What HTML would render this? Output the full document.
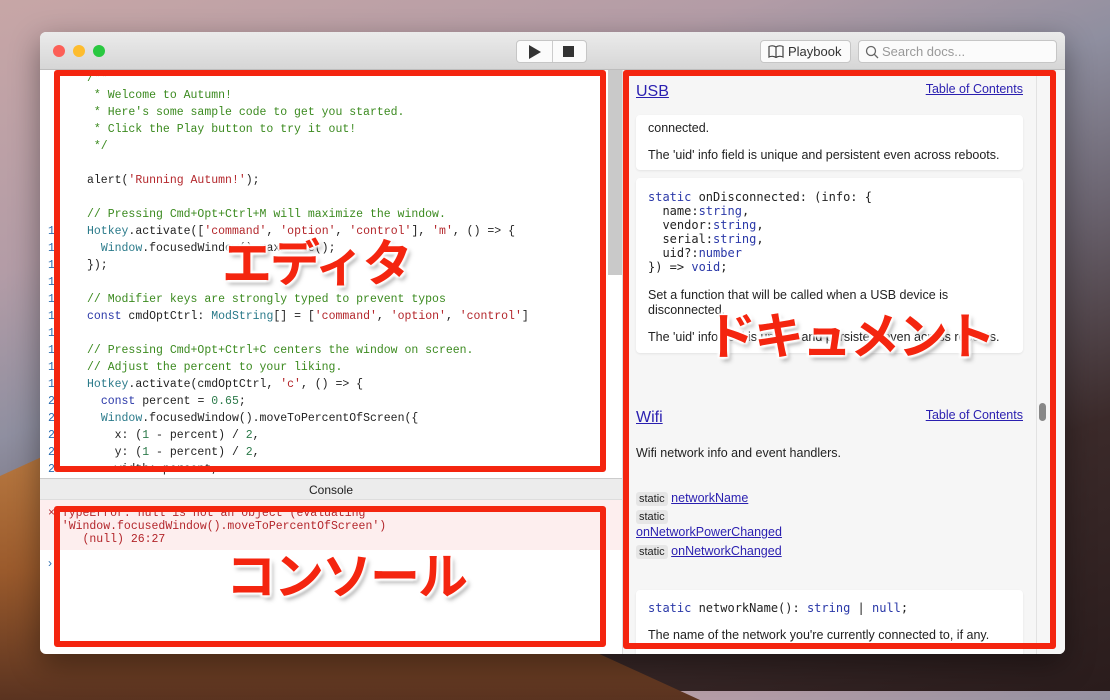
<!DOCTYPE html>
<html><head><meta charset="utf-8"><style>
*{margin:0;padding:0;box-sizing:border-box}
body{width:1110px;height:691px;overflow:hidden;position:relative;font-family:"Liberation Sans","Noto Sans CJK JP",sans-serif;
background:linear-gradient(160deg,#c7a6a6 0%,#b39ca6 25%,#8f8fa0 40%,#6b6470 55%,#3b2a2a 75%,#2a1c1c 100%);}
.dune{position:absolute;left:0;top:380px;width:700px;height:320px;background:linear-gradient(180deg,#c98a4c,#9a5a2c 60%,#5a3320);clip-path:polygon(0 30%,20% 10%,60% 60%,100% 100%,0 100%)}
.win{position:absolute;left:40px;top:32px;width:1025px;height:622px;background:#fff;border-radius:6px;overflow:hidden;box-shadow:0 10px 30px rgba(0,0,0,.4)}
.tb{position:absolute;left:0;top:0;width:100%;height:38px;background:linear-gradient(#ebebeb,#d6d6d6);border-bottom:1px solid #bdbdbd}
.dot{position:absolute;top:13px;width:12px;height:12px;border-radius:50%}
.btn{position:absolute;top:8px;height:23px;background:#fbfbfb;border:1px solid #c6c6c6;border-radius:4px}
.ed{position:absolute;left:0;top:38px;width:582px;height:408px;background:#fff;font-family:"Liberation Mono",monospace;font-size:11.5px;overflow:hidden}
.ln{position:absolute;left:8px;color:#2a6db0}
.c{position:absolute;left:47px;white-space:pre;color:#222}
.g{color:#3b8a1f}.r{color:#b3262b}.b{color:#2a38a8}.t{color:#2a7a8a}.n{color:#2c7a4a}
.con{position:absolute;left:0;top:446px;width:582px;height:22px;background:#ececec;border-top:1px solid #ccc;border-bottom:1px solid #ddd;text-align:center;font-size:12px;line-height:22px;color:#222}
.err{position:absolute;left:0;top:468px;width:582px;height:50px;background:#fdeeee;font-family:"Liberation Mono",monospace;font-size:11.5px;color:#b3262b;white-space:pre;padding:7px 0 0 8px;line-height:13px}
.doc{position:absolute;left:582px;top:38px;width:443px;height:584px;background:#f6f6f6;border-left:1px solid #ddd;font-size:12.5px;color:#222;overflow:hidden}
.doc a{color:#2a1fb0;text-decoration:underline}
.card{position:absolute;left:13px;width:387px;background:#fff;border-radius:4px;box-shadow:0 1px 2px rgba(0,0,0,.08)}
.mono{font-family:"DejaVu Sans Mono",monospace;font-size:12px;white-space:pre;line-height:14px}
.box{position:absolute;border:6px solid #f4250f;border-radius:3px}
.big{position:absolute;color:#f4250f;font-weight:bold;font-size:50px;font-family:"Noto Sans CJK JP",sans-serif;text-shadow:0 0 3px #fff,0 0 3px #fff,2px 2px 2px #fff,-2px -2px 2px #fff,2px -2px 2px #fff,-2px 2px 2px #fff,3px 4px 5px rgba(0,0,0,.35);letter-spacing:-2px;line-height:1}
.tag{background:#e6e6e6;border-radius:3px;padding:1px 3px;font-size:11px}
</style></head><body>
<div class="dune"></div>
<div class="win">
<div class="tb">
<div class="dot" style="left:13px;background:#fc5f57"></div>
<div class="dot" style="left:33px;background:#fdbc2e"></div>
<div class="dot" style="left:53px;background:#29c840"></div>
<div class="btn" style="left:476px;width:71px"><div style="position:absolute;left:35px;top:0;width:1px;height:21px;background:#ccc"></div>
<svg style="position:absolute;left:12px;top:4px" width="12" height="14"><path d="M0 0L12 7L0 14Z" fill="#333"/></svg>
<div style="position:absolute;left:46px;top:5px;width:11px;height:11px;background:#333"></div></div>
<div class="btn" style="left:720px;width:91px;font-size:13px;line-height:21px;color:#333;padding-left:27px">Playbook
<svg style="position:absolute;left:7px;top:4px" width="16" height="13"><path d="M8 2C6 0.5 3 0.5 1 1.5V12C3 11 6 11 8 12.5C10 11 13 11 15 12V1.5C13 0.5 10 0.5 8 2ZM8 2V12.5" fill="none" stroke="#444" stroke-width="1.2"/></svg></div>
<div class="btn" style="left:818px;width:199px;font-size:13px;line-height:21px;color:#999;padding-left:23px">Search docs...
<svg style="position:absolute;left:6px;top:4px" width="14" height="14"><circle cx="6" cy="6" r="4.5" fill="none" stroke="#666" stroke-width="1.3"/><path d="M9.3 9.3L13 13" stroke="#666" stroke-width="1.3"/></svg></div>
</div>
<div class="ed">
<div class="ln" style="top:153px;line-height:17px">1<br>1<br>1<br>1<br>1<br>1<br>1<br>1<br>1<br>1<br>2<br>2<br>2<br>2<br>2</div>
<div class="c" style="top:0;line-height:17px"><span class="g">/**
 * Welcome to Autumn!
 * Here's some sample code to get you started.
 * Click the Play button to try it out!
 */</span>

alert(<span class="r">'Running Autumn!'</span>);

<span class="g">// Pressing Cmd+Opt+Ctrl+M will maximize the window.</span>
<span class="t">Hotkey</span>.activate([<span class="r">'command'</span>, <span class="r">'option'</span>, <span class="r">'control'</span>], <span class="r">'m'</span>, () =&gt; {
  <span class="t">Window</span>.focusedWindow().maximize();
});

<span class="g">// Modifier keys are strongly typed to prevent typos</span>
<span class="b">const</span> cmdOptCtrl: <span class="t">ModString</span>[] = [<span class="r">'command'</span>, <span class="r">'option'</span>, <span class="r">'control'</span>]

<span class="g">// Pressing Cmd+Opt+Ctrl+C centers the window on screen.</span>
<span class="g">// Adjust the percent to your liking.</span>
<span class="t">Hotkey</span>.activate(cmdOptCtrl, <span class="r">'c'</span>, () =&gt; {
  <span class="b">const</span> percent = <span class="n">0.65</span>;
  <span class="t">Window</span>.focusedWindow().moveToPercentOfScreen({
    x: (<span class="n">1</span> - percent) / <span class="n">2</span>,
    y: (<span class="n">1</span> - percent) / <span class="n">2</span>,
    width: percent,</div>
<div style="position:absolute;left:568px;top:0;width:14px;height:205px;background:#c9c9c9"></div>
</div>
<div class="con">Console</div>
<div class="err">× TypeError: null is not an object (evaluating
  'Window.focusedWindow().moveToPercentOfScreen')
     (null) 26:27</div>
<div style="position:absolute;left:8px;top:524px;color:#2a6db0;font-size:12px">›</div>
<div class="doc">
<a style="position:absolute;left:13px;top:13px;font-size:16px">USB</a>
<a style="position:absolute;right:42px;top:12px">Table of Contents</a>
<div class="card" style="top:45px;height:55px;padding:5px 12px;line-height:16px">connected.<div style="margin-top:11px">The 'uid' info field is unique and persistent even across reboots.</div></div>
<div class="card" style="top:108px;height:175px;padding:12px">
<div class="mono"><span class="b">static</span> onDisconnected: (info: {
  name:<span class="b">string</span>,
  vendor:<span class="b">string</span>,
  serial:<span class="b">string</span>,
  uid?:<span class="b">number</span>
}) =&gt; <span class="b">void</span>;</div>
<div style="margin-top:14px;line-height:15px">Set a function that will be called when a USB device is disconnected.</div>
<div style="margin-top:12px">The 'uid' info field is unique and persistent even across reboots.</div></div>
<a style="position:absolute;left:13px;top:339px;font-size:16px">Wifi</a>
<a style="position:absolute;right:42px;top:338px">Table of Contents</a>
<div style="position:absolute;left:13px;top:376px">Wifi network info and event handlers.</div>
<div style="position:absolute;left:13px;top:420px;line-height:17px"><span class="tag">static</span> <a>networkName</a><br><span class="tag">static</span><br><a style="position:relative;top:-2px">onNetworkPowerChanged</a><br><span class="tag">static</span> <a>onNetworkChanged</a></div>
<div class="card" style="top:520px;height:80px;padding:11px 12px"><div class="mono"><span class="b">static</span> networkName(): <span class="b">string</span> | <span class="b">null</span>;</div><div style="margin-top:13px">The name of the network you're currently connected to, if any.</div></div>
<div style="position:absolute;left:413px;top:0;width:1px;height:584px;background:#e2e2e2"></div>
<div style="position:absolute;left:416px;top:333px;width:7px;height:18px;border-radius:4px;background:#888"></div>
</div>
</div>
<div class="box" style="left:54px;top:70px;width:552px;height:402px"></div>
<div class="box" style="left:54px;top:506px;width:552px;height:141px"></div>
<div class="box" style="left:623px;top:70px;width:433px;height:579px"></div>
<div class="big" style="left:222px;top:235px">エディタ</div>
<div class="big" style="left:226px;top:548px">コンソール</div>
<div class="big" style="left:706px;top:308px">ドキュメント</div>
</body></html>
